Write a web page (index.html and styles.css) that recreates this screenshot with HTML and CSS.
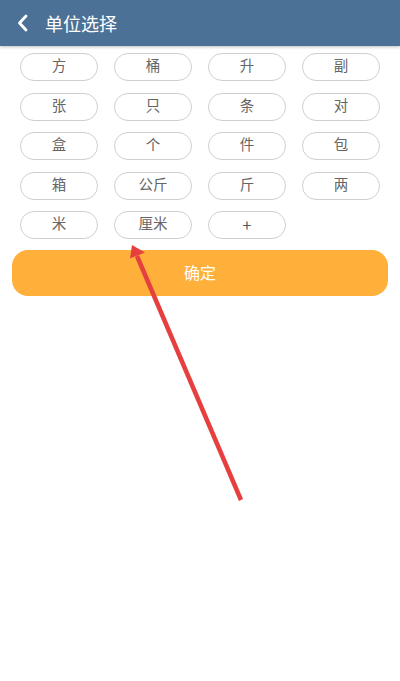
FILE: index.html
```html
<!DOCTYPE html>
<html lang="zh">
<head>
<meta charset="utf-8">
<title>单位选择</title>
<link rel="stylesheet" href="styles.css">
</head>
<body>
<header class="topbar">
  <svg class="back" width="12" height="20" viewBox="0 0 12 20"><path d="M9 3 L2.5 10 L9 17" fill="none" stroke="#fff" stroke-width="2.8" stroke-linecap="round" stroke-linejoin="round"/></svg>
  <h1 class="title">单位选择</h1>
</header>
<main class="content">
  <div class="units">
    <span class="chip">方</span>
    <span class="chip">桶</span>
    <span class="chip">升</span>
    <span class="chip">副</span>
    <span class="chip">张</span>
    <span class="chip">只</span>
    <span class="chip">条</span>
    <span class="chip">对</span>
    <span class="chip">盒</span>
    <span class="chip">个</span>
    <span class="chip">件</span>
    <span class="chip">包</span>
    <span class="chip">箱</span>
    <span class="chip">公斤</span>
    <span class="chip">斤</span>
    <span class="chip">两</span>
    <span class="chip">米</span>
    <span class="chip">厘米</span>
    <span class="chip chip-add">+</span>
  </div>
  <button class="confirm">确定</button>
</main>
<svg class="annot" width="400" height="681" viewBox="0 0 400 681">
  <line x1="241" y1="500" x2="137" y2="256" stroke="#e5403f" stroke-width="4.5"/>
  <polygon points="132,245 145,252.5 130,258.5" fill="#e5403f"/>
</svg>
</body>
</html>
```
FILE: styles.css
```css
html, body {
  margin: 0;
  padding: 0;
  background: #fff;
  font-family: "Noto Sans CJK SC", "Noto Sans", sans-serif;
}
body {
  position: relative;
  width: 400px;
  height: 681px;
  overflow: hidden;
}
.topbar {
  height: 46px;
  background: #4b7196;
  display: flex;
  align-items: center;
  padding-left: 17px;
  box-shadow: 0 1px 3px rgba(0,0,0,0.25);
  position: relative;
  z-index: 1;
}
.back {
  display: block;
  margin-top: 0;
}
.title {
  margin: 0 0 0 16px;
  font-size: 18px;
  font-weight: normal;
  color: #fff;
  line-height: 46px;
  letter-spacing: 0;
}
.content {
  padding-top: 7px;
}
.units {
  display: grid;
  grid-template-columns: repeat(4, 78px);
  column-gap: 16px;
  row-gap: 11.5px;
  justify-content: center;
}
.chip {
  box-sizing: border-box;
  height: 28px;
  border: 1px solid #cfcfcf;
  border-radius: 14px;
  display: flex;
  align-items: center;
  justify-content: center;
  font-size: 14.5px;
  line-height: 1;
  padding-bottom: 3px;
  color: #666;
}
.chip-add {
  font-size: 16px;
  color: #555;
}
.confirm {
  display: block;
  box-sizing: border-box;
  width: 376px;
  height: 46px;
  margin: 11px 12px 0;
  border: none;
  border-radius: 16px;
  background: #ffb03b;
  color: #fff;
  font-family: inherit;
  font-size: 16px;
  line-height: 1;
  padding: 0 0 3px;
}
.annot {
  position: absolute;
  left: 0;
  top: 0;
  pointer-events: none;
  z-index: 2;
}
```
